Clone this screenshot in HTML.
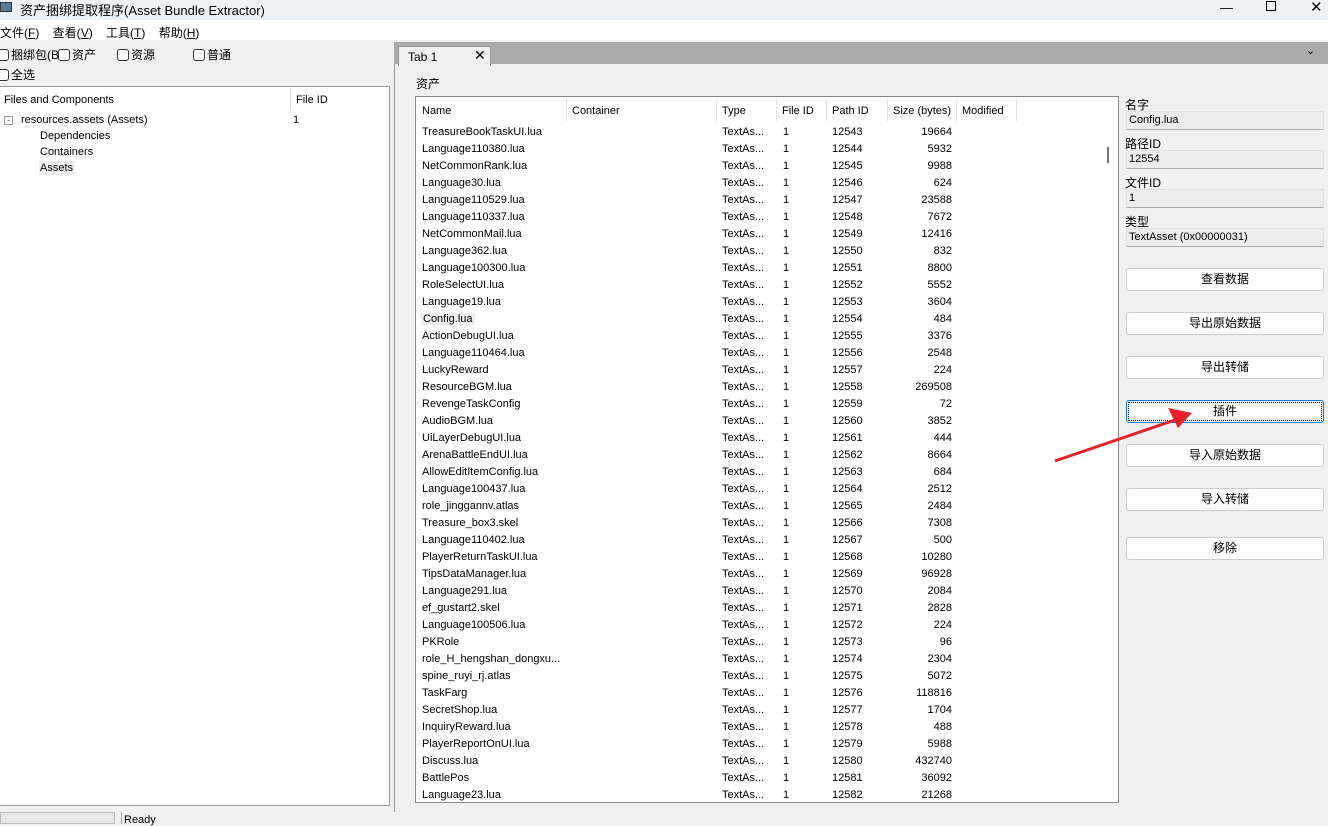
<!DOCTYPE html>
<html><head><meta charset="utf-8"><style>
*{margin:0;padding:0;box-sizing:border-box}
body{width:1328px;height:824px;background:#f0f0f0;font-family:"Liberation Sans","Noto Sans CJK SC",sans-serif;font-size:11px;color:#000;position:relative;overflow:hidden}
.a{position:absolute;white-space:nowrap}
.cb{display:inline-block;width:12px;height:12px;border:1px solid #333;border-radius:3px;background:#fff;vertical-align:-2px;margin-right:2px}
.fld{position:absolute;left:1126px;width:198px;height:19px;background:#ececec;border:1px solid #e0e0e0;border-bottom:1px solid #aaa;padding:2px 2px;font-size:11px;line-height:13px}
.btn{position:absolute;left:1126px;width:198px;height:23px;background:#fdfdfd;border:1px solid #ccc;border-radius:3px;text-align:center;line-height:21px;font-size:12px}
.row{position:absolute;left:0;height:17px;width:700px}
.row span{position:absolute;top:2px}
</style></head><body>
<div class="a" style="left:0;top:0;width:1328px;height:20px;background:#eef2f8"></div>
<div class="a" style="left:0;top:2px;width:12px;height:10px;background:#5a7a9a;border:1px solid #333"></div>
<div class="a" style="left:20px;top:0px;font-size:13px">资产捆绑提取程序(Asset Bundle Extractor)</div>
<div class="a" style="left:1220px;top:0;font-size:13px">—</div>
<div class="a" style="left:1266px;top:1px;width:10px;height:10px;border:1px solid #000"></div>
<div class="a" style="left:1310px;top:-2px;font-size:15px">✕</div>
<div class="a" style="left:0;top:20px;width:1328px;height:20px;background:#fff"></div>
<div class="a" style="left:0;top:24px;font-size:12px">文件(<u>F</u>)&nbsp;&nbsp;&nbsp;&nbsp;查看(<u>V</u>)&nbsp;&nbsp;&nbsp;&nbsp;工具(<u>T</u>)&nbsp;&nbsp;&nbsp;&nbsp;帮助(<u>H</u>)</div>
<div class="a" style="left:-3px;top:46px;font-size:12px"><span class="cb"></span>捆绑包(B</div>
<div class="a" style="left:58px;top:46px;font-size:12px"><span class="cb"></span>资产</div>
<div class="a" style="left:117px;top:46px;font-size:12px"><span class="cb"></span>资源</div>
<div class="a" style="left:193px;top:46px;font-size:12px"><span class="cb"></span>普通</div>
<div class="a" style="left:-3px;top:66px;font-size:12px"><span class="cb"></span>全选</div>
<div class="a" style="left:0;top:86px;width:390px;height:720px;background:#fff;border:1px solid #999;border-left:none"></div>
<div class="a" style="left:290px;top:88px;width:1px;height:22px;background:#ddd"></div>
<div class="a" style="left:4px;top:94px">Files and Components</div>
<div class="a" style="left:296px;top:94px">File ID</div>
<div class="a" style="left:4px;top:116px;width:9px;height:9px;border:1px solid #999;font-size:9px;line-height:6px;text-align:center;color:#333">-</div>
<div class="a" style="left:21px;top:114px">resources.assets (Assets)</div>
<div class="a" style="left:293px;top:114px">1</div>
<div class="a" style="left:40px;top:130px">Dependencies</div>
<div class="a" style="left:40px;top:146px">Containers</div>
<div class="a" style="left:39px;top:161px;background:#eee;padding:1px 1px">Assets</div>
<div class="a" style="left:394px;top:42px;width:934px;height:22px;background:#aaa"></div>
<div class="a" style="left:398px;top:46px;width:93px;height:20px;background:#f0f0f0;border:1px solid #999;border-bottom:none"></div>
<div class="a" style="left:408px;top:50px;font-size:12px">Tab 1</div>
<div class="a" style="left:474px;top:47px;font-size:14px">✕</div>
<div class="a" style="left:1306px;top:44px;font-size:11px">⌄</div>
<div class="a" style="left:394px;top:64px;width:1px;height:748px;background:#999"></div>
<div class="a" style="left:416px;top:75px;font-size:12px">资产</div>
<div class="a" style="left:415px;top:96px;width:704px;height:707px;background:#fff;border:1px solid #888;overflow:hidden">
<div class="a" style="left:6px;top:8px">Name</div><div class="a" style="left:156px;top:8px">Container</div><div class="a" style="left:306px;top:8px">Type</div><div class="a" style="left:366px;top:8px">File ID</div><div class="a" style="left:416px;top:8px">Path ID</div><div class="a" style="left:477px;top:8px">Size (bytes)</div><div class="a" style="left:546px;top:8px">Modified</div>
<div class="a" style="left:150px;top:2px;width:1px;height:22px;background:#e5e5e5"></div><div class="a" style="left:300px;top:2px;width:1px;height:22px;background:#e5e5e5"></div><div class="a" style="left:360px;top:2px;width:1px;height:22px;background:#e5e5e5"></div><div class="a" style="left:410px;top:2px;width:1px;height:22px;background:#e5e5e5"></div><div class="a" style="left:471px;top:2px;width:1px;height:22px;background:#e5e5e5"></div><div class="a" style="left:540px;top:2px;width:1px;height:22px;background:#e5e5e5"></div><div class="a" style="left:600px;top:2px;width:1px;height:22px;background:#e5e5e5"></div>
<div class="a" style="left:691px;top:50px;width:2px;height:16px;background:#777"></div>
<div id="rows"></div>
</div>
<div class="a" style="left:1125px;top:96px;font-size:12px">名字</div><div class="fld" style="top:111px">Config.lua</div>
<div class="a" style="left:1125px;top:135px;font-size:12px">路径ID</div><div class="fld" style="top:150px">12554</div>
<div class="a" style="left:1125px;top:174px;font-size:12px">文件ID</div><div class="fld" style="top:189px">1</div>
<div class="a" style="left:1125px;top:213px;font-size:12px">类型</div><div class="fld" style="top:228px">TextAsset (0x00000031)</div>
<div class="btn" style="top:268px">查看数据</div>
<div class="btn" style="top:312px">导出原始数据</div>
<div class="btn" style="top:356px">导出转储</div>
<div class="btn" style="top:400px;border:1px solid #0078d7;outline:1px dotted #000;outline-offset:-3px">插件</div>
<div class="btn" style="top:444px">导入原始数据</div>
<div class="btn" style="top:488px">导入转储</div>
<div class="btn" style="top:537px">移除</div>
<svg class="a" style="left:0;top:0" width="1328" height="824"><line x1="1055" y1="461" x2="1175" y2="420" stroke="#e8202a" stroke-width="3"/><polygon points="1192,413 1168,408 1178,428" fill="#e8202a"/></svg>
<div class="a" style="left:0;top:812px;width:115px;height:12px;background:#e8e8e8;border:1px solid #bbb"></div>
<div class="a" style="left:121px;top:812px;width:1px;height:12px;background:#aaa"></div>
<div class="a" style="left:124px;top:814px">Ready</div>
<script>
var d=[["TreasureBookTaskUI.lua",19664],["Language110380.lua",5932],["NetCommonRank.lua",9988],["Language30.lua",624],["Language110529.lua",23588],["Language110337.lua",7672],["NetCommonMail.lua",12416],["Language362.lua",832],["Language100300.lua",8800],["RoleSelectUI.lua",5552],["Language19.lua",3604],["Config.lua",484],["ActionDebugUI.lua",3376],["Language110464.lua",2548],["LuckyReward",224],["ResourceBGM.lua",269508],["RevengeTaskConfig",72],["AudioBGM.lua",3852],["UiLayerDebugUI.lua",444],["ArenaBattleEndUI.lua",8664],["AllowEditItemConfig.lua",684],["Language100437.lua",2512],["role_jinggannv.atlas",2484],["Treasure_box3.skel",7308],["Language110402.lua",500],["PlayerReturnTaskUI.lua",10280],["TipsDataManager.lua",96928],["Language291.lua",2084],["ef_gustart2.skel",2828],["Language100506.lua",224],["PKRole",96],["role_H_hengshan_dongxu...",2304],["spine_ruyi_rj.atlas",5072],["TaskFarg",118816],["SecretShop.lua",1704],["InquiryReward.lua",488],["PlayerReportOnUI.lua",5988],["Discuss.lua",432740],["BattlePos",36092],["Language23.lua",21268]];
var h="";d.forEach(function(r,i){var t=27+i*17;h+='<div class="row" style="top:'+t+'px"><span style="left:6px'+(i==11?';background:#eee;padding:0 2px;left:5px':'')+'">'+r[0]+'</span><span style="left:306px">TextAs...</span><span style="left:367px">1</span><span style="left:416px">'+(12543+i)+'</span><span style="right:164px">'+r[1]+'</span></div>';});
document.getElementById("rows").innerHTML=h;
</script>
</body></html>
